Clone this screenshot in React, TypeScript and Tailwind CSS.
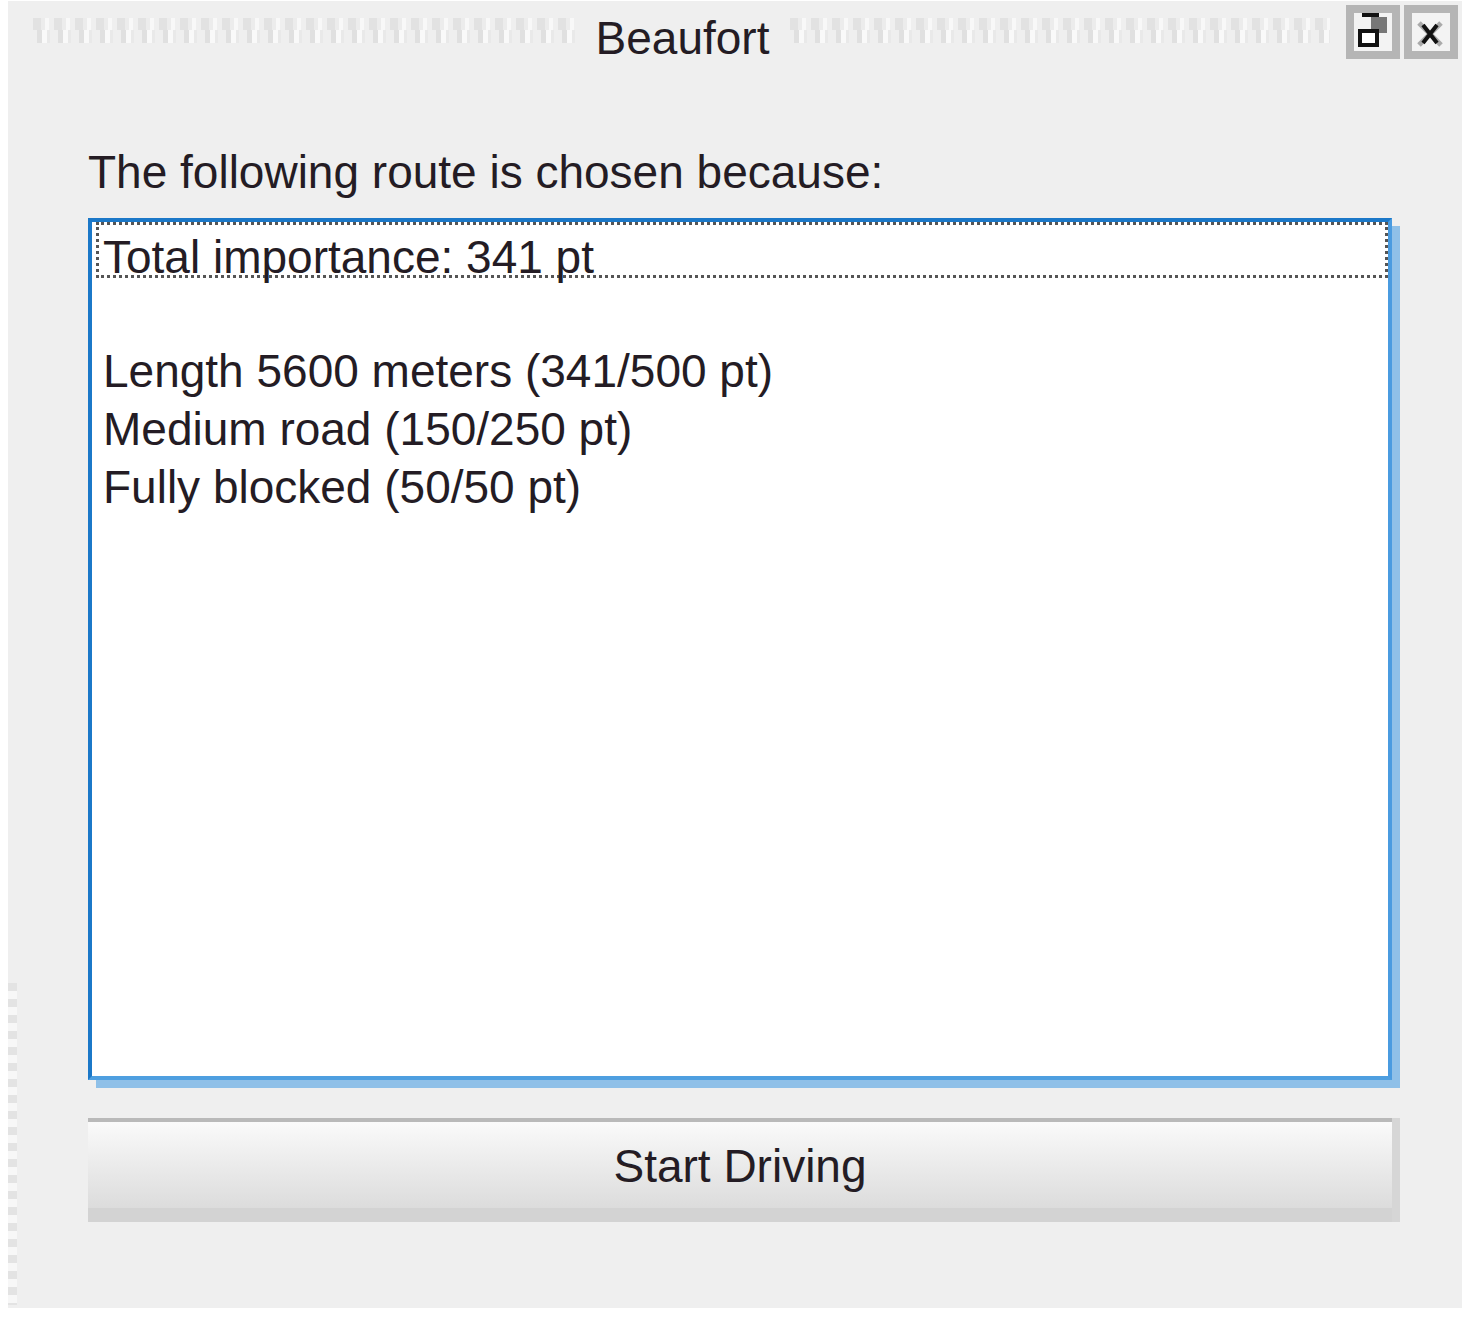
import React from "react";

const rows = [
  "Total importance: 341 pt",
  "",
  "Length 5600 meters (341/500 pt)",
  "Medium road (150/250 pt)",
  "Fully blocked (50/50 pt)",
];

const Grip: React.FC<{ className?: string }> = ({ className }) => (
  <div className={"flex flex-col " + (className || "")}>
    <div className="h-[12px] bg-[repeating-linear-gradient(90deg,#e2e2e2_0_8px,#ececec_8px_12px,#f8f8f8_12px_16px,transparent_16px_21px)]" />
    <div className="h-[13px] bg-[repeating-linear-gradient(90deg,transparent_0_4px,#e0e0e0_4px_9px,#f9f9f9_9px_14px,#e9e9e9_14px_17px,transparent_17px_21px)]" />
  </div>
);

const FloatButton: React.FC = () => (
  <div className="w-[54px] h-[54px] border-[8px] border-[#b5b5b5] bg-[#f3f3f3] relative">
    <svg width="38" height="38" viewBox="0 0 38 38" className="absolute left-0 top-0">
      <rect x="8" y="0" width="17" height="4" fill="#111" />
      <rect x="17" y="4" width="16" height="16" fill="#777" />
      <rect x="4" y="16" width="21" height="18" fill="#fff" />
      <rect x="6" y="18" width="17" height="14" fill="none" stroke="#111" strokeWidth="4" />
    </svg>
  </div>
);

const CloseButton: React.FC = () => (
  <div className="w-[54px] h-[54px] border-[8px] border-[#b5b5b5] bg-[#f3f3f3] relative">
    <svg width="38" height="38" viewBox="0 0 38 38" className="absolute left-0 top-0">
      <path d="M7 10 L29 32 M29 10 L7 32" stroke="#aaa" strokeWidth="5" />
      <path d="M11 12 L25 30 M25 12 L11 30" stroke="#111" strokeWidth="4" />
    </svg>
  </div>
);

export default function App() {
  return (
    <div className="w-[1463px] h-[1318px] bg-white pt-[1px] pl-[8px] font-['Liberation_Sans',Arial,sans-serif] text-[46px] text-[#241c24]">
      <div className="w-[1454px] h-[1307px] bg-[#efefef] relative">
        <div className="absolute left-0 top-[982px] w-[9px] h-[322px] bg-[repeating-linear-gradient(180deg,#e3e3e3_0_8px,#f7f7f7_8px_16px)]" />

        {/* title bar */}
        <div className="h-[62px] flex items-start">
          <Grip className="ml-[25px] mt-[17px] w-[542px]" />
          <div className="w-[215px] text-center leading-[58px] mt-[8px]">Beaufort</div>
          <Grip className="mt-[17px] w-[540px]" />
          <div className="ml-[16px] mt-[4px] flex gap-[4px]">
            <FloatButton />
            <CloseButton />
          </div>
        </div>

        <div className="pl-[80px] w-[1384px]">
          <div className="mt-[80px] leading-[58px]">The following route is chosen because:</div>

          <div className="mt-[17px] h-[862px] bg-white border-[4px] border-[#1b78c8] border-r-[#4a9be0] border-b-[#4e9fe0] shadow-[8px_8px_0_#8fc0e8] pl-[4px]">
            {rows.map((r, i) => (
              <div
                key={i}
                className={
                  i === 0
                    ? "h-[56px] leading-[64px] pl-[4px] whitespace-pre border-[3px] border-dotted border-[#555]"
                    : "h-[58px] leading-[70px] pl-[7px] whitespace-pre"
                }
              >
                {r}
              </div>
            ))}
          </div>

          <div className="mt-[38px] h-[104px] flex items-center justify-center pt-[2px] border-t-[4px] border-[#b9b9b9] border-b-[14px] border-b-[#d3d3d3] bg-linear-to-b from-[#fafafa] to-[#dcdcdc] shadow-[8px_0_0_#d6d6d6]">
            Start Driving
          </div>
        </div>
      </div>
    </div>
  );
}
